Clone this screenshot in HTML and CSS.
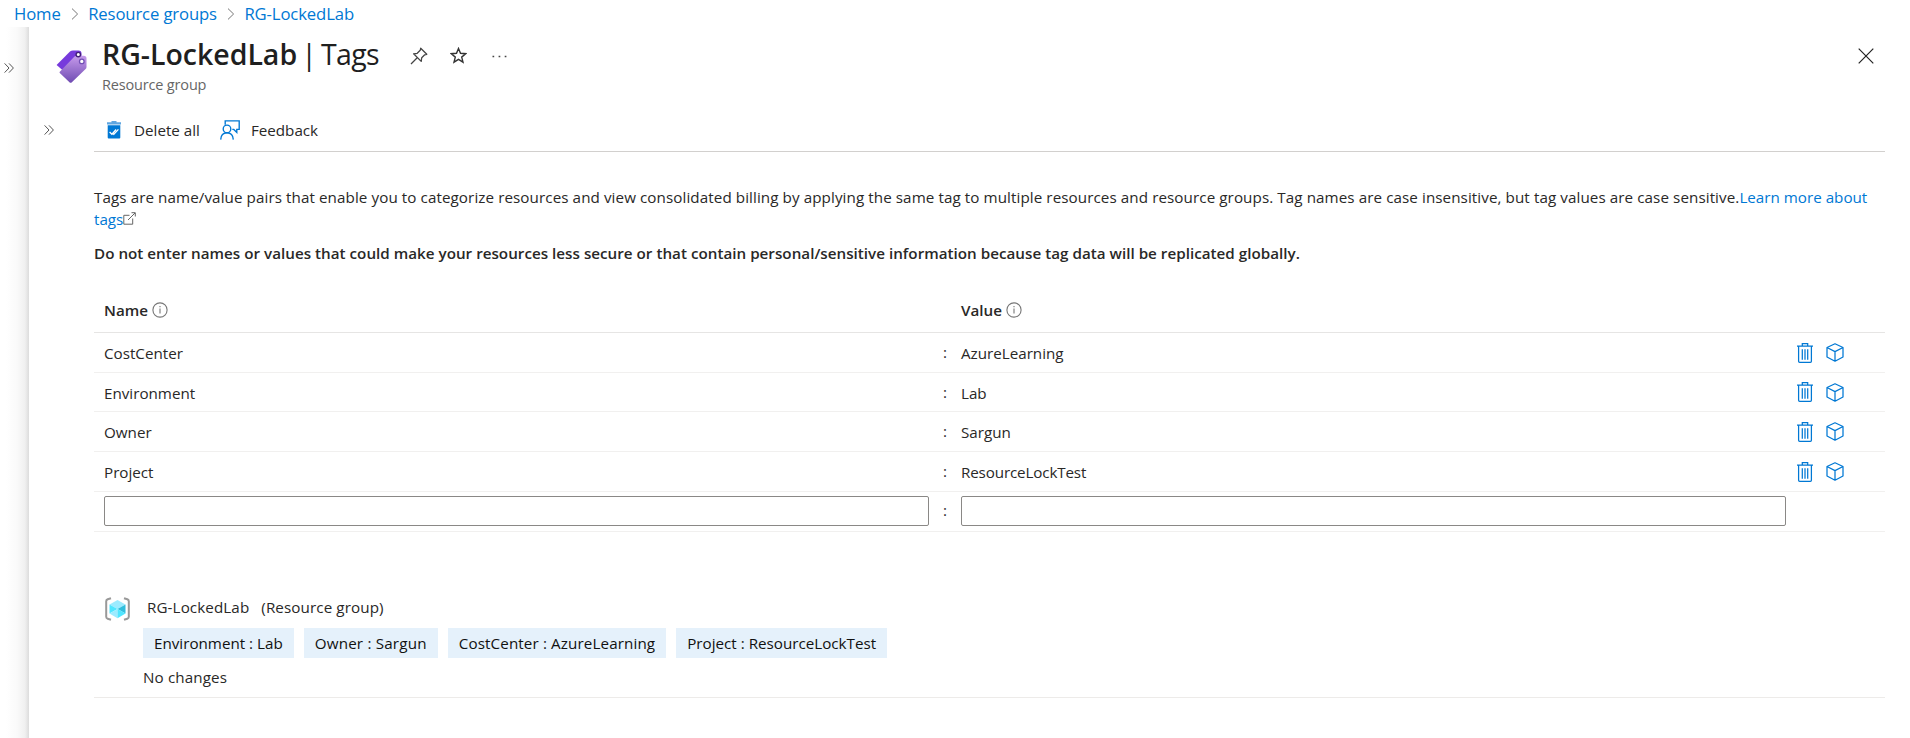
FILE: index.html
```html
<!DOCTYPE html>
<html lang="en">
<head>
<meta charset="utf-8">
<title>RG-LockedLab | Tags</title>
<link rel="stylesheet" href="styles.css">
</head>
<body>
<svg class="defs" width="0" height="0" aria-hidden="true">
  <defs>
    <linearGradient id="violet" x1="0" y1="0" x2="0" y2="1"><stop offset="0" stop-color="#c69aeb"/><stop offset="1" stop-color="#6f4bb2"/></linearGradient>
    <symbol id="chevrons" viewBox="0 0 10 10"><path d="M.6.4 5 5 .6 9.6M5 .4 9.4 5 5 9.6" fill="none" stroke="#555" stroke-width="1"/></symbol>
    <symbol id="next" viewBox="0 0 8 12"><path d="M1 .6 6.6 6 1 11.4" fill="none" stroke="#777" stroke-width="1"/></symbol>
    <symbol id="info" viewBox="0 0 16 16"><circle cx="8" cy="8" r="7.1" fill="none" stroke="#777" stroke-width="1.1"/><path d="M8 6.6v5M8 4v1.3" stroke="#777" stroke-width="1.1"/></symbol>
    <symbol id="trash" viewBox="0 0 16 20"><path d="M0 3.2h16M5.3 3V.7h5.4V3M1.6 3.2v15.1q0 1 1 1h10.8q1 0 1-1V3.2M5.3 6.2v10.5M8 6.2v10.5M10.7 6.2v10.5" fill="none" stroke="#0078d4" stroke-width="1.25"/></symbol>
    <symbol id="cube" viewBox="0 0 18 19"><path d="M9 .8 17 4.5V14L9 18.2 1 14V4.5ZM1 4.5 9 8.6l8-4.1M9 8.6v9.6" fill="none" stroke="#0078d4" stroke-width="1.25" stroke-linejoin="round"/></symbol>
  </defs>
</svg>
<nav class="breadcrumb">
  <a>Home</a><svg class="next"><use href="#next"/></svg><a>Resource groups</a><svg class="next"><use href="#next"/></svg><a>RG-LockedLab</a>
</nav>
<div class="shell">
  <aside class="rail"><svg class="chev"><use href="#chevrons"/></svg></aside>
  <main class="blade">
    <header class="head">
      <svg class="tag-icon" viewBox="0 0 31 33"><path d="M.6 15 14 1.6Q15.2.6 17 .6h5.5q3 0 3 3V10L7 20.5Z" fill="#773adc"/><path d="M3.8 21.8 18.5 6.6q.9-.9 2.4-.9h6.8q2.8 0 2.8 2.8v8.4q0 1.3-.9 2.2L15.6 32.4q-1 .9-1.9 0L3.8 22.9q-.6-.6 0-1.1Z" fill="url(#violet)"/><circle cx="22.3" cy="4.6" r="2.2" fill="#fff" stroke="#432078" stroke-width="1.4"/><circle cx="25.8" cy="11.4" r="2.3" fill="#fff" stroke="#7350b5" stroke-width="1.3"/></svg>
      <div class="titles">
        <h1><b>RG-LockedLab</b><span class="bar">|</span><span class="page">Tags</span></h1>
        <p>Resource group</p>
      </div>
      <svg class="pin" viewBox="0 0 18 18"><path d="M10.7 1.2 16.8 7.3 14.7 7.8 11.7 10.8 11.2 14.4 3.6 6.8 7.2 6.3 10.2 3.3ZM7.2 10.8 1 17" fill="none" stroke="#444" stroke-width="1.25" stroke-linejoin="round"/></svg>
      <svg class="star" viewBox="0 0 17 17"><path d="m8.5 1.5 2 4.8 5.2.4-4 3.4 1.3 5.1-4.5-2.8L4 15.2l1.3-5.1-4-3.4 5.2-.4Z" fill="none" stroke="#333" stroke-width="1.4"/></svg>
      <svg class="dots" viewBox="0 0 15 3"><path d="M.5 1.5h1.7M6.6 1.5h1.7M12.7 1.5h1.7" stroke="#444" stroke-width="1.6"/></svg>
      <svg class="close" viewBox="0 0 16 16"><path d="m.7.7 14.6 14.6M15.3.7.7 15.3" stroke="#222" stroke-width="1.2"/></svg>
    </header>
    <div class="body">
      <div class="menu"><svg class="chev"><use href="#chevrons"/></svg></div>
      <div class="content">
        <div class="toolbar">
          <svg class="delete" viewBox="0 0 14 18"><path d="M4.5 0h5v1.2H14v2.3H0V1.2h4.500Z" fill="#5ea5e0"/><path d="M.7 4.200h12.600v12.300q0 1-1 1H1.700q-1 0-1-1Z" fill="#0078d4"/><path d="m2.600 11 2.300 2.200 4.200-4.700M6 12.600l.8.8 4.600-5" fill="none" stroke="#fff" stroke-width="1.300"/></svg>
          <span>Delete all</span>
          <svg class="feedback" viewBox="0 0 20 20"><path d="M5.200 4.700V.8h14v8.600h-2.400v3l-3-3h-1.500M.7 19.600q.4-6.900 6.300-6.900t6.300 6.900" fill="none" stroke="#0078d4" stroke-width="1.350"/><circle cx="7" cy="8.900" r="3.800" fill="none" stroke="#0078d4" stroke-width="1.350"/></svg>
          <span>Feedback</span>
        </div>
        <p class="intro"><span class="lead">Tags are name/value pairs that enable you to categorize resources and view consolidated billing by applying the same tag to multiple resources and resource groups. Tag names are case insensitive, but tag values are case sensitive.</span><a>Learn more about<br>tags</a><svg class="external" viewBox="0 0 13 13"><path d="M6.500 3.300H.8v8.900h8.900V6.500M5 8l7-7M8.500.7h3.800v3.800" fill="none" stroke="#666" stroke-width="1"/></svg></p>
        <p class="warning">Do not enter names or values that could make your resources less secure or that contain personal/sensitive information because tag data will be replicated globally.</p>
        <section class="table">
          <div class="row columns"><span class="name">Name<svg class="info"><use href="#info"/></svg></span><i></i><span class="value">Value<svg class="info"><use href="#info"/></svg></span></div>
          <div class="row"><span class="name">CostCenter</span><i>:</i><span class="value">AzureLearning</span><svg class="trash"><use href="#trash"/></svg><svg class="cube"><use href="#cube"/></svg></div>
          <div class="row short"><span class="name">Environment</span><i>:</i><span class="value">Lab</span><svg class="trash"><use href="#trash"/></svg><svg class="cube"><use href="#cube"/></svg></div>
          <div class="row"><span class="name">Owner</span><i>:</i><span class="value">Sargun</span><svg class="trash"><use href="#trash"/></svg><svg class="cube"><use href="#cube"/></svg></div>
          <div class="row"><span class="name">Project</span><i>:</i><span class="value tight">ResourceLockTest</span><svg class="trash"><use href="#trash"/></svg><svg class="cube"><use href="#cube"/></svg></div>
          <div class="row entry"><input class="name" aria-label="Name"><i>:</i><input class="value" aria-label="Value"></div>
        </section>
        <section class="resource">
          <svg class="group" viewBox="0 0 25 24"><path d="M6 1.200 2.700 2.300Q1.200 2.800 1.200 4.300v15.400q0 1.500 1.500 2L6 22.800M19 1.200l3.300 1.100q1.500.5 1.500 2v15.400q0 1.500-1.500 2L19 22.800" fill="none" stroke="#999" stroke-width="2"/><path d="m12.500 3 8 4.600L12.500 12 4.500 7.600Z" fill="#9cebff"/><path d="M4.500 7.600 12.500 12 4.500 16.500Z" fill="#50e6ff"/><path d="m4.500 16.500 8-4.500v9.200Z" fill="#9cebff"/><path d="m20.500 7.600-8 4.400 8 4.500Z" fill="#32bedd"/><path d="m20.500 16.500-8-4.500v9.200Z" fill="#50e6ff"/></svg>
          <div class="detail">
            <div class="caption"><span>RG-LockedLab</span><span>(Resource group)</span></div>
            <div class="chips"><span>Environment : Lab</span><span class="wide">Owner : Sargun</span><span class="mid">CostCenter : AzureLearning</span><span>Project : ResourceLockTest</span></div>
            <p>No changes</p>
          </div>
        </section>
      </div>
    </div>
  </main>
</div>
</body>
</html>
```
FILE: styles.css
```css
* { box-sizing: border-box; }
body { margin: 0; height: 738px; overflow: hidden; background: #fff; color: #292827; font: 15.2px/22px "Open Sans", "Noto Sans", sans-serif; }
p, h1 { margin: 0; }
svg { display: block; flex: none; }
a { color: #0078d4; }
.defs { position: absolute; }
.breadcrumb { display: flex; align-items: center; height: 27px; padding-left: 14px; font-size: 16.7px; letter-spacing: -0.13px; }
.next { width: 8px; height: 12px; margin: 0 9.5px 0 10px; }
.shell { display: flex; height: 711px; }
.rail { width: 29px; padding: 36px 0 0 4px; background: linear-gradient(to right, #fff 6px, #fafafa 17px, #f0f0f0 25px, #dcdcdc 29px); }
.chev { width: 10px; height: 10px; }
.blade { flex: 1; min-width: 0; background: #fff; }
.head { display: flex; height: 83px; padding: 0 36px 0 27px; }
.tag-icon { width: 31px; height: 33px; margin-top: 23px; }
.titles { margin-left: 15px; width: 277px; padding-top: 7px; }
.titles h1 { display: flex; font-size: 28.5px; line-height: 40px; font-weight: 400; color: #1f1f1f; white-space: nowrap; }
.titles b { width: 195px; font-weight: 600; letter-spacing: -0.02px; }
.titles .bar { width: 24px; text-align: center; }
.titles .page { letter-spacing: -0.7px; }
.titles p { font-size: 14.5px; line-height: 22px; letter-spacing: -0.17px; color: #666; }
.pin { width: 18px; height: 18px; margin: 20px 0 0 31px; }
.star { width: 17px; height: 17px; margin: 20px 0 0 22px; }
.dots { width: 15px; height: 3px; margin: 28px 0 0 25px; }
.close { width: 16px; height: 16px; margin: 21px 0 0 auto; }
.body { display: flex; }
.menu { width: 65px; padding: 15px 0 0 15px; }
.content { width: 1791px; }
.toolbar { display: flex; align-items: center; height: 42px; padding: 0 0 2px 13px; border-bottom: 1px solid #d2d0ce; }
.delete { width: 14px; height: 18px; margin-right: 13px; }
.feedback { width: 20px; height: 20px; margin: 0 11px 0 20px; }
.intro { margin-top: 34px; height: 45px; line-height: 22.4px; white-space: nowrap; }
.lead { letter-spacing: 0.084px; }
.external { display: inline-block; width: 13px; height: 13px; }
.warning { margin-top: 11px; font-weight: 600; letter-spacing: 0.016px; white-space: nowrap; }
.table { margin-top: 25px; }
.row { display: flex; align-items: center; height: 40px; padding-left: 10px; border-bottom: 1px solid #f1f0ef; }
.row.short { height: 39px; }
.row.short span { padding-top: 1px; }
.row i { width: 32px; text-align: center; font-style: normal; padding-bottom: 1px; }
.name, .value { width: 825px; }
.tight { letter-spacing: -0.14px; }
.columns { height: 44px; padding-bottom: 2px; border-color: #e6e5e4; font-weight: 600; }
.columns .name, .columns .value { display: flex; align-items: center; }
.info { width: 16px; height: 16px; margin-left: 4px; }
.trash { width: 16px; height: 20px; margin-left: 11px; }
.cube { width: 18px; height: 19px; margin-left: 13px; }
input { height: 30px; border: 1px solid #8a8886; border-radius: 2px; background: #fff; padding: 0; }
.entry { padding-bottom: 2px; }
.resource { display: flex; margin-top: 55px; height: 111px; padding: 9px 0 0 11px; border-bottom: 1px solid #edebe9; }
.group { width: 25px; height: 24px; margin-top: 1px; }
.detail { margin-left: 13px; }
.caption { display: flex; gap: 12px; padding-left: 4px; letter-spacing: 0.1px; }
.chips { display: flex; gap: 10px; margin-top: 10px; }
.chips span { padding: 0 11px; background: #e5f1fb; line-height: 30px; color: #111; }
.chips .wide { letter-spacing: 0.19px; }
.chips .mid { letter-spacing: 0.12px; }
.detail p { margin-top: 8px; letter-spacing: 0.12px; }
```
